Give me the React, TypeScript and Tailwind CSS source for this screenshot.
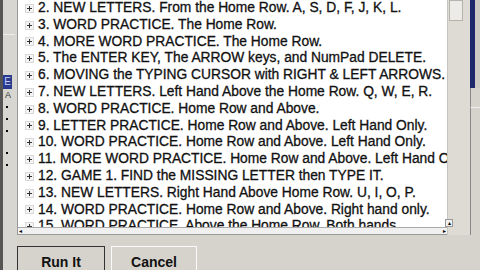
import React from 'react';

const items = [
  '2. NEW LETTERS. From the Home Row. A, S, D, F, J, K, L.',
  '3. WORD PRACTICE. The Home Row.',
  '4. MORE WORD PRACTICE. The Home Row.',
  '5. The ENTER KEY, The ARROW keys, and NumPad DELETE.',
  '6. MOVING the TYPING CURSOR with RIGHT & LEFT ARROWS.',
  '7. NEW LETTERS. Left Hand Above the Home Row. Q, W, E, R.',
  '8. WORD PRACTICE. Home Row and Above.',
  '9. LETTER PRACTICE. Home Row and Above. Left Hand Only.',
  '10. WORD PRACTICE. Home Row and Above. Left Hand Only.',
  '11. MORE WORD PRACTICE. Home Row and Above. Left Hand Only.',
  '12. GAME 1. FIND the MISSING LETTER then TYPE IT.',
  '13. NEW LETTERS. Right Hand Above Home Row. U, I, O, P.',
  '14. WORD PRACTICE. Home Row and Above. Right hand only.',
  '15. WORD PRACTICE. Above the Home Row. Both hands.',
];

const Plus = () => (
  <svg width="9" height="9" viewBox="0 0 9 9" className="shrink-0">
    <rect x="0.5" y="0.5" width="8" height="8" fill="#f4f4f4" stroke="#b8b8b8" strokeDasharray="1 1" />
    <path d="M2 4.5h5M4.5 2v5" stroke="#333" strokeWidth="1" />
  </svg>
);

export default function App() {
  return (
    <div className="w-[480px] h-[270px] overflow-hidden bg-[#d6d3cc] flex font-['Liberation_Sans',Arial,sans-serif]">
      {/* left sidebar strip */}
      <div className="w-[17px] h-full flex flex-col items-start border-l-[3px] border-[#555] bg-[#d8d6d0]">
        <div className="mt-[34px] h-px w-[12px] bg-[#eeeeee]" />
        <div className="mt-[40px] w-[9px] h-[14px] bg-[#2a3a8c] flex items-center justify-center text-[10px] leading-none text-[#c8d0ff]">E</div>
        <div className="ml-[2px] mt-[2px] text-[9px] leading-none text-[#333]">A</div>
        <div className="ml-[3px] mt-[6px] flex flex-col gap-[10px]">
          <span className="w-[2px] h-[2px] bg-black" />
          <span className="w-[2px] h-[2px] bg-black" />
          <span className="w-[2px] h-[2px] bg-black" />
          <span className="w-[2px] h-[2px] bg-black mt-[10px]" />
          <span className="w-[2px] h-[2px] bg-black" />
        </div>
      </div>

      {/* main dialog area */}
      <div className="flex-1 flex flex-col">
        <div className="flex h-[235px]">
          {/* list box */}
          <div className="w-[430px] h-full bg-white border-b border-l border-[#999] flex flex-col">
            <div className="flex-1 overflow-hidden">
              <div className="flex flex-col">
                {items.map((t) => (
                  <div key={t} className="h-[16.8px] shrink-0 flex items-center gap-[4px] pl-[7px] whitespace-nowrap text-[13.8px] text-[#111] [-webkit-text-stroke:0.3px_#111]">
                    <Plus />
                    <span>{t}</span>
                  </div>
                ))}
              </div>
            </div>
            <div className="h-[7px] bg-[#f0f0f0] border-t border-[#aaa] flex items-center justify-between px-[1px]">
              <span className="text-[6px] leading-none">◂</span>
              <span className="text-[6px] leading-none">▸</span>
            </div>
          </div>
          {/* vertical scrollbar */}
          <div className="w-[23px] h-full flex flex-col bg-[#dedbd5] border-l border-[#c8c6c0]">
            <div className="w-[14px] h-[21px] bg-[#ecebe7] border border-[#b5b3ad] ml-[1px]" />
            <div className="flex-1" />
            <div className="w-[8px] h-[8px] border border-[#999] bg-[#f0f0f0] text-[6px] leading-none flex items-center justify-center mb-[8px] -ml-[3px]">▴</div>
          </div>
          {/* right edge */}
          <div className="w-[10px] h-full flex flex-col">
            <div className="h-[88px] border-l-[5px] border-[#1e2a6c] bg-[#cfccc6]" />
            <div className="h-[20px] border-l border-[#888] border-b border-b-[#eeeeee]" />
            <div className="flex-1 border-l border-[#888]" />
          </div>
        </div>

        {/* buttons */}
        <div className="flex-1 flex items-end gap-[6px]">
          <button className="w-[88px] h-[24px] border border-[#333] border-b-0 bg-[#d6d3cc] text-[14px] font-bold text-[#111] pt-[5px] flex items-start justify-center">Run It</button>
          <button className="w-[86px] h-[24px] border border-[#fafafa] border-b-0 bg-[#d6d3cc] text-[14px] font-bold text-[#111] pt-[5px] flex items-start justify-center">Cancel</button>
        </div>
      </div>
    </div>
  );
}
